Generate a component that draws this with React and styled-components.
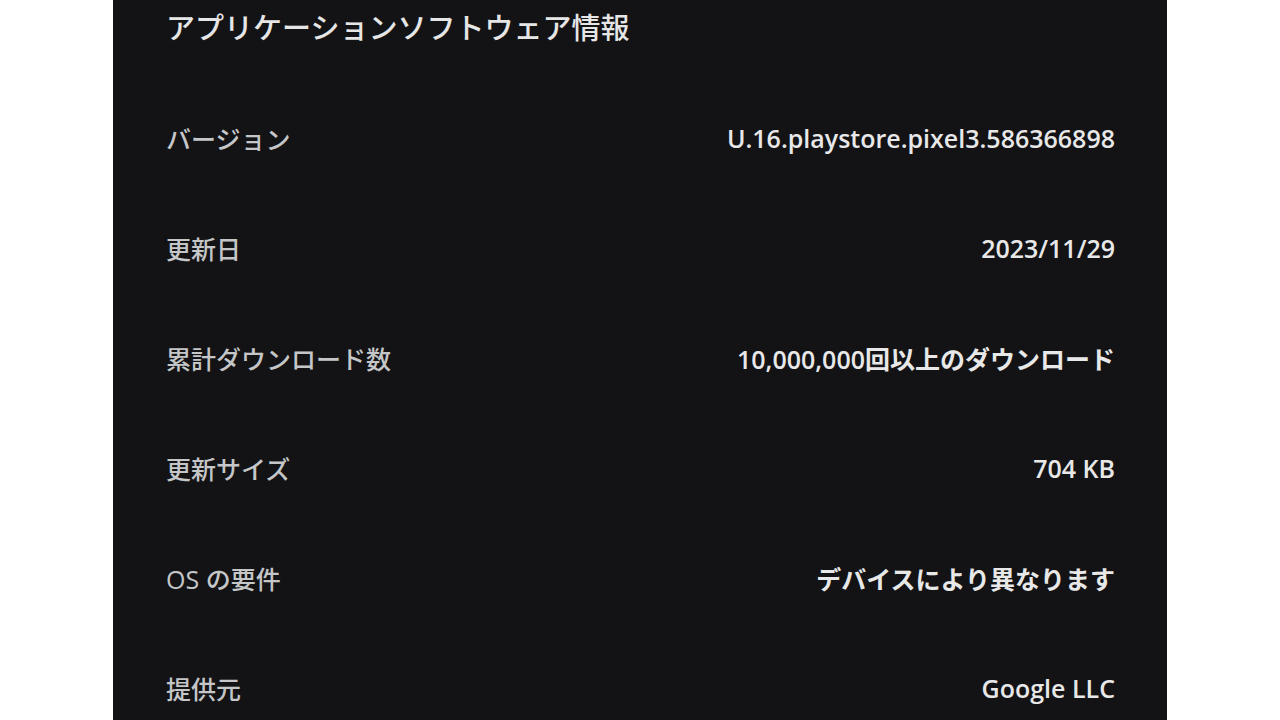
import React from 'react';
import styled, { createGlobalStyle } from 'styled-components';

const GlobalStyle = createGlobalStyle`
  html, body {
    margin: 0;
    padding: 0;
    background: #ffffff;
  }
  body {
    font-family: "Open Sans", "Noto Sans CJK JP", sans-serif;
  }
`;

const Page = styled.div`
  width: 1280px;
  height: 720px;
  overflow: hidden;
  display: flex;
  justify-content: center;
  background: #ffffff;
`;

const Panel = styled.div`
  width: 1054px;
  height: 720px;
  background: #131315;
  padding: 5px 52px 0 53px;
  box-sizing: border-box;
  display: flex;
  flex-direction: column;
`;

const Title = styled.h1`
  margin: 0 0 36px;
  height: 54px;
  display: flex;
  align-items: center;
  font-family: "Noto Sans CJK JP", sans-serif;
  font-size: 29px;
  font-weight: 500;
  color: #e6e6e6;
`;

const Row = styled.div`
  height: 110px;
  flex-shrink: 0;
  display: flex;
  align-items: center;
  justify-content: space-between;
`;

const Label = styled.span`
  font-size: 25px;
  font-weight: 500;
  color: #c4c6c8;
`;

const Value = styled.span`
  font-size: 25px;
  font-weight: 600;
  color: #e8e8e8;
  text-align: right;
`;

const rows = [
  ['バージョン', 'U.16.playstore.pixel3.586366898'],
  ['更新日', '2023/11/29'],
  ['累計ダウンロード数', '10,000,000回以上のダウンロード'],
  ['更新サイズ', '704 KB'],
  ['OS の要件', 'デバイスにより異なります'],
  ['提供元', 'Google LLC'],
];

const App = () => (
  <Page>
    <GlobalStyle />
    <Panel>
      <Title>アプリケーションソフトウェア情報</Title>
      {rows.map(([label, value]) => (
        <Row key={label}>
          <Label>{label}</Label>
          <Value>{value}</Value>
        </Row>
      ))}
    </Panel>
  </Page>
);

export default App;
